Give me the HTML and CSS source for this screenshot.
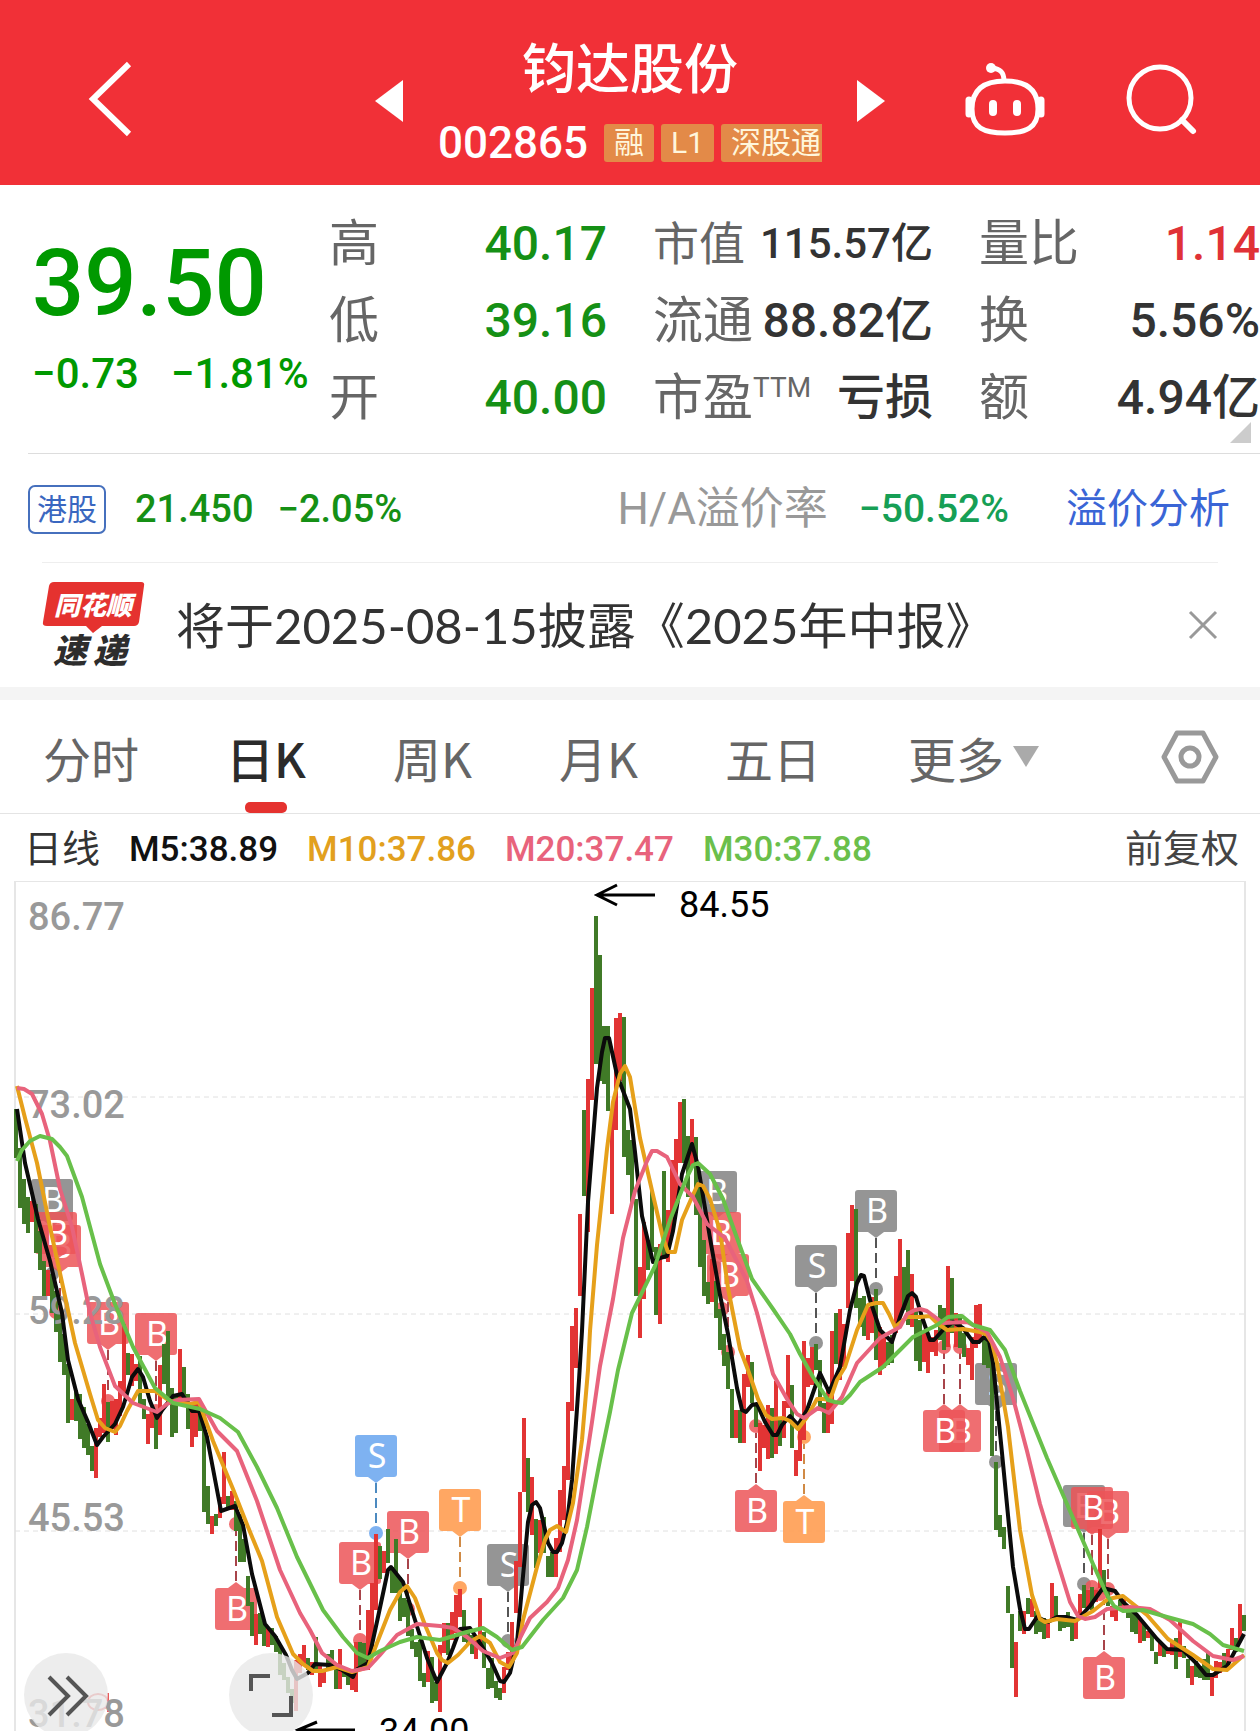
FILE: index.html
```html
<!DOCTYPE html>
<html lang="zh-CN">
<head>
<meta charset="utf-8">
<meta name="viewport" content="width=device-width, initial-scale=1">
<title>钧达股份 002865</title>
<link rel="stylesheet" href="styles.css">
</head>
<body>
<header class="topbar">
  <div class="topbar-left">
    <button class="icon-btn" type="button" aria-label="返回">
      <svg width="44" height="76" viewBox="0 0 44 76"><path d="M41 3 5 38l36 35" fill="none" stroke="#fff" stroke-width="6"/></svg>
    </button>
  </div>
  <div class="switcher">
    <button class="icon-btn" type="button" aria-label="上一只">
      <svg width="28" height="42" viewBox="0 0 28 42"><path d="M28 0v42L0 21z" fill="#fff"/></svg>
    </button>
    <div class="title">
      <h1 class="name">钧达股份</h1>
      <div class="code-line">
        <span class="code">002865</span>
        <span class="tag">融</span>
        <span class="tag">L1</span>
        <span class="tag tag-cut">深股通</span>
      </div>
    </div>
    <button class="icon-btn" type="button" aria-label="下一只">
      <svg width="28" height="42" viewBox="0 0 28 42"><path d="M0 0v42l28-21z" fill="#fff"/></svg>
    </button>
  </div>
  <div class="topbar-right">
    <button class="icon-btn" type="button" aria-label="智能助手">
      <svg width="82" height="76" viewBox="0 0 82 76" fill="none" stroke="#fff" stroke-width="5">
        <path d="M41 20c19 0 33 7 33 28 0 19-12 24-33 24S8 67 8 48c0-21 14-28 33-28z"/>
        <path d="M40 20c0-9-4-12-12-13"/>
        <circle cx="27" cy="7" r="5" fill="#fff" stroke="none"/>
        <path d="M5 39v14M77 39v14" stroke-width="7" stroke-linecap="round"/>
        <path d="M29 43v8M53 43v8" stroke-width="8" stroke-linecap="round"/>
      </svg>
    </button>
    <button class="icon-btn" type="button" aria-label="搜索">
      <svg width="72" height="76" viewBox="0 0 72 76" fill="none" stroke="#fff" stroke-width="5">
        <circle cx="34" cy="37" r="31"/><path d="m56 59 11 11" stroke-width="6" stroke-linecap="round"/>
      </svg>
    </button>
  </div>
</header>

<main>
<section class="quote">
  <div class="price-box">
    <div class="price">39.50</div>
    <div class="change"><span>−0.73</span><span>−1.81%</span></div>
  </div>
  <dl class="stats">
    <div class="stat"><dt>高</dt><dd class="down">40.17</dd></div>
    <div class="stat"><dt>低</dt><dd class="down">39.16</dd></div>
    <div class="stat"><dt>开</dt><dd class="down">40.00</dd></div>
  </dl>
  <dl class="stats">
    <div class="stat stat-tight"><dt>市值</dt><dd>115.57亿</dd></div>
    <div class="stat"><dt>流通</dt><dd>88.82亿</dd></div>
    <div class="stat"><dt>市盈<sup>TTM</sup></dt><dd>亏损</dd></div>
  </dl>
  <dl class="stats">
    <div class="stat"><dt>量比</dt><dd class="up">1.14</dd></div>
    <div class="stat"><dt>换</dt><dd>5.56%</dd></div>
    <div class="stat"><dt>额</dt><dd>4.94亿</dd></div>
  </dl>
  <svg class="corner" width="21" height="21" viewBox="0 0 21 21" aria-hidden="true"><path d="M21 0v21H0z" fill="#ccc"/></svg>
</section>

<section class="hk">
  <span class="hk-badge">港股</span>
  <span class="hk-num">21.450</span>
  <span class="hk-num">−2.05%</span>
  <span class="hk-label">H/A溢价率</span>
  <span class="hk-premium">−50.52%</span>
  <a class="hk-link" href="#premium">溢价分析</a>
</section>

<section class="notice">
  <svg class="logo" width="104" height="88" viewBox="0 0 104 88" role="img" aria-label="同花顺速递">
    <path d="M12 1h87q4 0 3 4l-5 36q-1 4-5 4H60l-9 7-7-7H5q-5 0-4-4L7 5q1-4 5-4z" fill="#e5322f"/>
    <text class="logo-top" x="12" y="34">同花顺</text>
    <text class="logo-bottom" x="11" y="82">速</text>
    <text class="logo-bottom" x="51" y="82">递</text>
  </svg>
  <a class="notice-text" href="#report">将于2025-08-15披露《2025年中报》</a>
  <button class="icon-btn" type="button" aria-label="关闭">
    <svg width="30" height="30" viewBox="0 0 30 30"><path d="m2 2 26 26M28 2 2 28" stroke="#999" stroke-width="3"/></svg>
  </button>
</section>

<nav class="tabs">
  <button class="tab" type="button">分时</button>
  <button class="tab tab-on" type="button">日K</button>
  <button class="tab" type="button">周K</button>
  <button class="tab" type="button">月K</button>
  <button class="tab" type="button">五日</button>
  <button class="tab tab-more" type="button">更多<svg width="26" height="21" viewBox="0 0 26 21"><path d="M0 0h26L13 21z" fill="#aaa"/></svg></button>
  <button class="icon-btn tab-settings" type="button" aria-label="图表设置">
    <svg width="58" height="56" viewBox="0 0 58 56" fill="none" stroke="#999" stroke-width="5" stroke-linejoin="round"><path d="M16 4h26l13 24-13 24H16L3 28z"/><circle cx="29" cy="28" r="9"/></svg>
  </button>
</nav>

<div class="ma-row">
  <span class="ma-period">日线</span>
  <span class="ma">M5:38.89</span>
  <span class="ma ma-10">M10:37.86</span>
  <span class="ma ma-20">M20:37.47</span>
  <span class="ma ma-30">M30:37.88</span>
  <button class="adjust" type="button">前复权</button>
</div>

<section class="chart" aria-label="日K线图">
<svg class="plot" viewBox="0 881 1260 850">
  <defs>
    <path id="tag-down" d="M-18 0h36a3 3 0 0 1 3 3v36a3 3 0 0 1-3 3h-10l-8 6-8-6h-10a3 3 0 0 1-3-3v-36a3 3 0 0 1 3-3z"/>
    <path id="tag-up" d="M-18 0h10l8-6 8 6h10a3 3 0 0 1 3 3v36a3 3 0 0 1-3 3h-36a3 3 0 0 1-3-3v-36a3 3 0 0 1 3-3z"/>
  </defs>
  <path class="frame" d="M15 1740V881H1245V1740"/>
  <path class="grid" d="M15 1097H1245M15 1314H1245M15 1531H1245"/>

  <g class="gray">
    <use href="#tag-down" x="52" y="1179"/><text x="53" y="1212">B</text><circle cx="52" cy="1274" r="7"/>
    <use href="#tag-down" x="716" y="1171"/><text x="717" y="1204">B</text><circle cx="716" cy="1268" r="7"/>
    <use href="#tag-down" x="508" y="1544"/><text x="509" y="1577">S</text><path d="M508 1592V1634"/><circle cx="508" cy="1641" r="7"/>
    <use href="#tag-down" x="816" y="1245"/><text x="817" y="1278">S</text><path d="M816 1293V1337"/><circle cx="816" cy="1343" r="7"/>
    <use href="#tag-down" x="876" y="1190"/><text x="877" y="1223">B</text><path d="M876 1238V1283"/><circle cx="876" cy="1289" r="7"/>
    <use href="#tag-down" x="996" y="1363"/><text x="997" y="1396">S</text><path d="M996 1411V1455"/><circle cx="996" cy="1462" r="7"/>
    <use href="#tag-down" x="1084" y="1485"/><text x="1085" y="1518">B</text><path d="M1084 1533V1577"/><circle cx="1084" cy="1584" r="7"/>
  </g>
  <g class="red">
    <use href="#tag-down" x="60" y="1225"/><text x="61" y="1258">B</text><path d="M60 1273V1313"/><circle cx="56" cy="1312" r="7"/>
    <use href="#tag-down" x="56" y="1212"/><text x="57" y="1245">B</text>
    <use href="#tag-down" x="108" y="1302"/><text x="109" y="1335">B</text><path d="M108 1350V1394"/><circle cx="108" cy="1401" r="7"/>
    <use href="#tag-down" x="156" y="1313"/><text x="157" y="1346">B</text><path d="M156 1361V1405"/><circle cx="156" cy="1411" r="7"/>
    <use href="#tag-up" x="236" y="1588"/><text x="237" y="1621">B</text><path d="M236 1581V1531"/><circle cx="236" cy="1524" r="7"/>
    <use href="#tag-down" x="360" y="1542"/><text x="361" y="1575">B</text><path d="M360 1590V1633"/><circle cx="360" cy="1640" r="7"/>
    <use href="#tag-down" x="408" y="1511"/><text x="409" y="1544">B</text><path d="M408 1559V1603"/><circle cx="408" cy="1609" r="7"/>
    <use href="#tag-down" x="720" y="1212"/><text x="721" y="1245">B</text><circle cx="722" cy="1309" r="7"/>
    <use href="#tag-down" x="728" y="1254"/><text x="729" y="1287">B</text><path d="M728 1302V1345"/><circle cx="728" cy="1352" r="7"/>
    <use href="#tag-up" x="756" y="1490"/><text x="757" y="1523">B</text><path d="M756 1483V1433"/><circle cx="756" cy="1426" r="7"/>
    <use href="#tag-up" x="960" y="1410"/><text x="961" y="1443">B</text><path d="M960 1404V1353"/><circle cx="960" cy="1347" r="7"/>
    <use href="#tag-up" x="944" y="1410"/><text x="945" y="1443">B</text><path d="M944 1404V1353"/><circle cx="944" cy="1347" r="7"/>
    <use href="#tag-down" x="1108" y="1491"/><text x="1109" y="1524">B</text><path d="M1108 1539V1583"/><circle cx="1108" cy="1589" r="7"/>
    <use href="#tag-down" x="1092" y="1487"/><text x="1093" y="1520">B</text><path d="M1092 1535V1580"/><circle cx="1092" cy="1587" r="7"/>
    <use href="#tag-up" x="1104" y="1657"/><text x="1105" y="1690">B</text><path d="M1104 1650V1600"/><circle cx="1100" cy="1594" r="7"/>
  </g>
  <g class="orange">
    <use href="#tag-down" x="460" y="1489"/><text x="461" y="1522">T</text><path d="M460 1537V1581"/><circle cx="460" cy="1588" r="7"/>
    <use href="#tag-up" x="804" y="1501"/><text x="805" y="1534">T</text><path d="M804 1494V1444"/><circle cx="804" cy="1437" r="7"/>
  </g>
  <g class="blue">
    <use href="#tag-down" x="376" y="1435"/><text x="377" y="1468">S</text><path d="M376 1483V1527"/><circle cx="376" cy="1533" r="7"/>
  </g>
  <path class="ring" d="M108 1693V1712M88 1702a10 8 0 1 0 20 0a10 8 0 1 0-20 0"/>

  <path class="bars-down" d="M16 1109V1158M20 1148V1208M24 1179V1224M28 1197V1233M36 1204V1253M40 1231V1270M44 1261V1296M52 1274V1313M56 1291V1332M60 1313V1362M64 1334V1375M68 1364V1423M76 1390V1421M80 1394V1439M84 1407V1448M88 1424V1455M92 1446V1471M108 1402V1442M128 1353V1375M140 1356V1405M144 1399V1419M156 1416V1449M164 1344V1384M168 1331V1399M172 1388V1437M176 1396V1433M184 1367V1403M188 1394V1429M200 1403V1431M204 1411V1512M208 1486V1524M216 1514V1526M228 1496V1508M236 1501V1531M240 1514V1562M244 1539V1562M248 1576V1606M252 1602V1636M260 1613V1634M264 1621V1646M272 1628V1645M276 1636V1652M280 1645V1675M284 1663V1680M288 1677V1693M292 1689V1703M308 1658V1670M316 1637V1670M328 1654V1670M332 1650V1667M336 1663V1689M344 1667V1677M348 1668V1685M360 1642V1670M364 1643V1667M380 1546V1579M388 1529V1563M392 1567V1593M396 1539V1593M400 1577V1621M404 1598V1617M408 1600V1636M412 1629V1649M416 1642V1657M420 1640V1681M424 1673V1687M432 1657V1703M436 1682V1701M448 1623V1655M464 1610V1642M468 1628V1643M472 1635V1654M484 1632V1668M488 1668V1689M492 1658V1688M496 1681V1698M500 1688V1700M528 1458V1512M536 1519V1568M544 1517V1553M548 1556V1577M552 1552V1577M584 1110V1196M596 916V1064M600 955V1081M604 1026V1084M608 1026V1111M624 1017V1157M628 1130V1175M632 1140V1202M636 1199V1296M648 1240V1270M652 1191V1252M656 1247V1315M664 1171V1259M684 1099V1163M688 1136V1197M696 1137V1215M700 1184V1267M704 1240V1296M708 1282V1304M716 1281V1318M720 1309V1350M724 1334V1366M728 1352V1389M732 1389V1438M740 1410V1443M752 1362V1403M756 1403V1427M772 1408V1458M780 1420V1446M792 1385V1448M816 1344V1370M820 1360V1410M824 1403V1433M836 1313V1364M856 1209V1308M860 1298V1327M864 1296V1336M876 1289V1360M888 1342V1365M892 1335V1363M904 1267V1310M908 1250V1325M916 1310V1361M920 1320V1371M940 1305V1340M944 1308V1350M952 1278V1333M960 1314V1348M964 1333V1357M984 1337V1365M988 1340V1368M992 1350V1456M996 1462V1530M1000 1515V1537M1004 1527V1549M1008 1586V1613M1012 1614V1668M1020 1611V1631M1028 1598V1614M1036 1611V1634M1040 1617V1632M1044 1618V1639M1056 1596V1617M1060 1617V1631M1064 1617V1628M1068 1612V1627M1072 1617V1641M1084 1585V1608M1092 1587V1610M1104 1570V1592M1108 1590V1606M1120 1600V1610M1128 1608V1618M1132 1611V1632M1136 1615V1634M1144 1624V1641M1152 1632V1651M1156 1652V1664M1164 1646V1657M1176 1638V1669M1184 1646V1658M1188 1659V1678M1196 1661V1677M1200 1666V1678M1204 1659V1680M1208 1653V1680M1224 1653V1669M1236 1638V1652M1244 1615V1631"/>
  <path class="bars-up" d="M32 1201V1222M48 1270V1296M72 1399V1420M96 1428V1478M100 1418V1437M104 1384V1433M112 1401V1429M116 1399V1435M120 1381V1416M124 1324V1394M132 1354V1386M136 1364V1381M148 1414V1444M152 1411V1428M160 1365V1435M180 1349V1399M192 1403V1447M196 1399V1437M212 1516V1534M220 1497V1518M224 1452V1504M232 1491V1510M256 1614V1645M268 1628V1647M296 1660V1711M300 1654V1673M304 1645V1665M312 1662V1675M320 1663V1687M324 1670V1683M340 1649V1689M352 1670V1690M356 1642V1692M368 1610V1670M372 1583V1647M376 1534V1610M384 1551V1573M428 1651V1682M440 1645V1712M444 1623V1653M452 1612V1640M456 1595V1633M460 1589V1617M476 1637V1659M480 1598V1647M504 1667V1693M508 1652V1670M512 1622V1663M516 1561V1613M520 1492V1567M524 1418V1492M532 1477V1535M540 1520V1553M556 1538V1577M560 1490V1552M564 1466V1520M568 1402V1480M572 1326V1411M576 1308V1368M580 1214V1296M588 1079V1232M592 988V1100M612 1109V1214M616 1018V1130M620 1013V1081M640 1267V1338M644 1222V1299M660 1244V1324M668 1210V1262M672 1160V1234M676 1139V1213M680 1102V1163M692 1119V1166M712 1259V1302M736 1410V1438M744 1374V1443M748 1355V1387M760 1423V1471M764 1425V1448M768 1405V1459M776 1381V1454M784 1401V1438M788 1355V1408M796 1450V1476M800 1423V1461M804 1341V1440M808 1358V1387M812 1347V1385M828 1390V1433M832 1331V1424M840 1309V1380M844 1324V1367M848 1233V1308M852 1205V1281M868 1307V1340M872 1297V1333M880 1327V1375M884 1337V1368M896 1276V1333M900 1239V1317M912 1274V1327M924 1333V1362M928 1333V1373M932 1337V1352M936 1330V1356M948 1266V1347M956 1313V1347M968 1348V1365M972 1337V1380M976 1305V1348M980 1304V1340M1016 1642V1697M1024 1611V1634M1032 1599V1617M1048 1620V1638M1052 1583V1622M1076 1620V1639M1080 1594V1615M1088 1590V1608M1096 1590V1602M1100 1529V1588M1112 1606V1617M1116 1608V1621M1124 1599V1610M1140 1618V1643M1148 1631V1638M1160 1643V1656M1168 1648V1654M1172 1641V1655M1180 1622V1657M1192 1666V1685M1212 1673V1696M1216 1661V1678M1220 1662V1673M1228 1649V1664M1232 1628V1650M1240 1604V1641"/>

  <g class="axis">
    <text x="28" y="930">86.77</text><text x="28" y="1118">73.02</text><text x="28" y="1324">59.28</text><text x="28" y="1531">45.53</text><text x="28" y="1727">31.78</text>
  </g>

  <polyline class="line ma5-line" points="17,1109 25,1163 38,1219 50,1261 62,1313 68,1360 78,1399 88,1422 97,1445 103,1437 115,1424 123,1407 132,1377 138,1369 143,1377 150,1401 157,1418 163,1409 173,1396 182,1394 192,1411 199,1411 207,1437 221,1511 235,1506 243,1525 252,1574 265,1624 275,1636 286,1655 292,1670 297,1679 308,1673 315,1664 330,1665 342,1670 353,1677 356,1670 368,1663 378,1617 388,1570 391,1567 403,1582 415,1620 427,1658 437,1682 447,1663 453,1648 460,1629 470,1628 480,1643 492,1663 500,1681 504,1682 510,1673 517,1643 522,1587 528,1522 532,1505 536,1502 540,1508 548,1543 553,1552 557,1552 562,1543 567,1523 572,1480 579,1380 582,1331 588,1202 597,1088 602,1052 605,1038 609,1038 617,1075 630,1109 635,1152 642,1216 653,1262 660,1258 667,1256 673,1231 682,1174 692,1144 698,1166 710,1238 720,1295 728,1334 737,1388 742,1410 746,1412 752,1405 757,1404 765,1422 773,1435 777,1435 782,1425 790,1416 798,1425 807,1410 820,1373 829,1392 840,1367 850,1310 857,1283 861,1275 864,1276 870,1300 880,1330 892,1342 900,1317 908,1296 912,1293 916,1297 922,1317 930,1340 934,1340 943,1330 953,1322 963,1328 973,1342 979,1342 984,1337 989,1341 993,1363 1002,1453 1013,1567 1020,1609 1025,1629 1029,1629 1037,1617 1048,1622 1057,1617 1066,1617 1077,1620 1090,1606 1103,1588 1115,1591 1123,1602 1137,1615 1157,1639 1167,1649 1183,1650 1197,1664 1206,1675 1213,1675 1227,1666 1244,1634"/>
  <polyline class="line ma10-line" points="17,1086 25,1118 37,1163 50,1227 63,1287 75,1343 90,1394 98,1420 105,1428 115,1432 120,1426 127,1411 138,1391 155,1391 170,1401 190,1404 199,1402 213,1441 233,1489 248,1527 262,1561 277,1617 293,1654 303,1664 313,1671 322,1671 337,1667 352,1672 368,1667 377,1643 390,1610 400,1592 407,1586 415,1598 425,1625 437,1653 442,1660 448,1663 458,1655 470,1642 480,1636 490,1643 500,1662 509,1667 517,1653 523,1620 537,1567 545,1540 550,1530 557,1526 566,1532 573,1503 582,1440 588,1370 590,1331 597,1245 607,1149 613,1102 620,1074 625,1066 630,1077 640,1138 653,1195 663,1238 668,1252 675,1252 682,1220 692,1197 698,1184 703,1186 710,1199 720,1231 728,1288 740,1349 748,1370 758,1399 766,1415 772,1419 783,1418 790,1421 798,1429 807,1417 817,1399 823,1399 830,1400 837,1380 845,1367 857,1330 868,1305 876,1303 883,1303 889,1314 895,1327 907,1317 920,1317 930,1316 937,1323 947,1330 963,1329 980,1332 987,1335 992,1343 997,1363 1008,1427 1020,1530 1032,1595 1040,1619 1045,1622 1057,1619 1075,1621 1093,1611 1108,1599 1123,1596 1147,1615 1168,1639 1193,1655 1213,1669 1227,1670 1244,1655"/>
  <polyline class="line ma20-line" points="17,1088 24,1089 32,1094 42,1114 50,1141 60,1189 72,1227 82,1274 90,1313 100,1347 115,1386 133,1403 157,1412 167,1404 177,1400 199,1399 217,1431 237,1451 257,1501 280,1570 300,1613 310,1630 322,1653 337,1665 352,1671 368,1668 380,1655 397,1635 417,1624 440,1626 453,1628 467,1637 483,1651 500,1658 513,1653 520,1638 530,1618 547,1602 558,1588 568,1560 577,1520 587,1455 592,1422 600,1366 613,1299 623,1238 635,1191 647,1161 652,1151 657,1151 667,1157 680,1184 693,1197 707,1224 725,1238 747,1281 757,1313 773,1374 787,1399 797,1414 804,1418 818,1408 829,1413 842,1397 857,1363 880,1338 900,1327 907,1314 915,1310 920,1309 927,1311 943,1323 967,1322 987,1332 1000,1357 1013,1398 1027,1451 1040,1504 1057,1560 1070,1602 1078,1616 1085,1619 1095,1617 1107,1609 1130,1607 1150,1609 1170,1620 1193,1641 1213,1656 1233,1660 1244,1656"/>
  <polyline class="line ma30-line" points="17,1161 22,1150 30,1141 40,1136 52,1139 60,1147 67,1156 82,1197 100,1264 115,1304 133,1347 155,1388 173,1403 200,1409 220,1418 238,1432 257,1467 277,1508 297,1557 323,1610 343,1637 357,1653 368,1658 380,1651 400,1642 417,1637 440,1640 467,1632 483,1628 497,1637 512,1650 522,1647 543,1620 563,1598 577,1570 587,1527 600,1460 610,1412 618,1370 632,1313 655,1266 670,1220 687,1177 693,1165 698,1163 710,1174 723,1199 737,1238 752,1279 773,1309 790,1334 800,1354 813,1377 828,1400 835,1402 842,1403 850,1395 860,1382 883,1367 898,1352 913,1337 937,1325 948,1317 962,1316 973,1325 990,1330 1005,1350 1020,1391 1047,1458 1070,1511 1093,1564 1107,1595 1114,1606 1123,1611 1143,1610 1167,1617 1193,1624 1210,1634 1223,1645 1244,1651"/>

  <path class="arrow" d="M655 895H597M617 885 597 895l20 10M355 1730H299M317 1722 298 1730l19 10"/>
  <text class="peak" x="679" y="917">84.55</text>
  <text class="peak" x="379" y="1744">34.00</text>
</svg>
<div class="tools">
  <button class="round-btn" type="button" aria-label="展开">
    <svg width="84" height="84" viewBox="0 0 84 84"><path d="m25 24 19 19-19 19M43 24l19 19-19 19" fill="none" stroke="#555" stroke-width="4"/></svg>
  </button>
  <button class="round-btn" type="button" aria-label="全屏">
    <svg width="84" height="84" viewBox="0 0 84 84"><path d="M22 38V23h19M43 62h19V43" fill="none" stroke="#555" stroke-width="4"/></svg>
  </button>
</div>
</section>
</main>
</body>
</html>
```

FILE: styles.css
```css
* { box-sizing: border-box; }

body {
  margin: 0;
  background: #fff;
  color: #333;
  font-family: Roboto, "Noto Sans CJK SC", sans-serif;
  line-height: 1;
}

button {
  border: 0;
  padding: 0;
  background: none;
  color: inherit;
  font: inherit;
  cursor: pointer;
}

a { color: inherit; text-decoration: none; }
svg { display: block; }
h1, dl, dd { margin: 0; }

.icon-btn { flex: none; }

/* Title bar */
.topbar {
  display: grid;
  grid-template-columns: 1fr auto 1fr;
  height: 185px;
  background: #f13037;
  color: #fff;
}

.topbar-left,
.topbar-right {
  display: flex;
  align-items: center;
  padding: 12px 62px 0 88px;
}

.topbar-right {
  justify-content: flex-end;
  gap: 80px;
  padding-left: 0;
}

.switcher {
  display: flex;
  align-items: center;
  gap: 35px;
  padding-top: 17px;
}

.title {
  width: 384px;
  overflow: hidden;
}

.name {
  font-size: 54px;
  font-weight: 500;
  line-height: 64px;
  text-align: center;
}

.code-line {
  display: flex;
  align-items: center;
  gap: 7px;
  height: 60px;
  padding-top: 20px;
}

.code {
  margin-right: 9px;
  font-size: 44px;
  font-weight: 500;
  line-height: 40px;
}

.tag {
  flex: none;
  padding: 0 10px;
  border-radius: 3px;
  background: #e38a48;
  color: #fff6dc;
  font-size: 30px;
  line-height: 38px;
}

/* Quote */
.quote {
  position: relative;
  display: grid;
  grid-template-columns: minmax(0, 251fr) minmax(0, 278fr) minmax(0, 280fr) minmax(0, 281fr);
  column-gap: 46px;
  padding: 20px 0 18px 32px;
}

.quote::after {
  content: "";
  position: absolute;
  right: 0;
  bottom: 0;
  left: 28px;
  border-bottom: 1px solid #ddd;
}

.price-box {
  padding-top: 33px;
  color: #009900;
  font-weight: 500;
  white-space: nowrap;
}

.price {
  font-size: 92px;
  line-height: 92px;
}

.change {
  display: flex;
  gap: 32px;
  margin-top: 23px;
  font-size: 42px;
  line-height: 42px;
}

.stat {
  display: flex;
  align-items: center;
  justify-content: space-between;
  height: 77px;
  font-size: 48px;
  white-space: nowrap;
}

.stat dt { color: #666; font-size: 50px; }
.stat dd { font-weight: 500; }
.stat-tight { font-size: 42px; }
.stat-tight dt { font-size: 46px; }
.stat .down { color: #159015; }
.stat .up { color: #e03237; }

.stat sup {
  font-size: 28px;
  line-height: 28px;
}

.corner {
  position: absolute;
  right: 9px;
  bottom: 11px;
}

/* Hong Kong share row */
.hk {
  display: flex;
  align-items: center;
  height: 108px;
  padding: 2px 30px 0 28px;
  font-size: 38px;
}

.hk-badge {
  margin-right: 29px;
  padding: 0 7px;
  border: 2px solid #4670bd;
  border-radius: 7px;
  color: #3a67c0;
  font-size: 30px;
  line-height: 45px;
}

.hk-num {
  margin-right: 24px;
  color: #159015;
  font-weight: 500;
}

.hk-label {
  margin-left: auto;
  color: #999;
  font-size: 44px;
}

.hk-premium {
  margin: 0 57px 0 31px;
  color: #169f55;
  font-size: 39px;
  font-weight: 500;
}

.hk-link { color: #3a65d6; font-size: 41px; }

/* Notice */
.notice {
  display: flex;
  align-items: center;
  height: 125px;
  margin: 0 42px;
  border-top: 1px solid #eee;
}

.logo-top,
.logo-bottom {
  font-family: "Noto Sans CJK SC", sans-serif;
  font-style: italic;
  font-weight: 900;
}

.logo-top { fill: #fff; font-size: 26px; }
.logo-bottom { fill: #2d2d2d; font-size: 34px; }

.notice-text {
  flex: 1;
  padding-left: 30px;
  font-family: Lato, "Noto Sans CJK SC", sans-serif;
  font-size: 49px;
  white-space: nowrap;
}

/* Period tabs */
.tabs {
  display: flex;
  align-items: center;
  gap: 87px;
  height: 127px;
  padding: 0 41px 0 43px;
  border-top: 13px solid #f4f4f4;
  border-bottom: 1px solid #e4e4e4;
  color: #666;
  font-family: "Noto Sans CJK SC", sans-serif;
  font-size: 48px;
}

.tab {
  position: relative;
  flex: none;
  height: 113px;
}

.tab-on { color: #2b2b2b; font-weight: 500; }

.tab-on::after {
  content: "";
  position: absolute;
  bottom: 0;
  left: 50%;
  width: 42px;
  height: 11px;
  margin-left: -21px;
  border-radius: 5px;
  background: #e5322f;
}

.tab-more {
  display: flex;
  align-items: center;
  gap: 9px;
}

.tab-settings { margin-left: auto; }

/* Moving-average legend */
.ma-row {
  display: flex;
  align-items: center;
  gap: 29px;
  height: 67px;
  padding: 3px 21px 0 24px;
  font-size: 35px;
  white-space: nowrap;
}

.ma-period,
.adjust { font-size: 38px; }
.ma { color: #111; font-weight: 500; }
.ma-10 { color: #e2a01e; }
.ma-20 { color: #e8637c; }
.ma-30 { color: #6bbf4b; }
.adjust { margin-left: auto; color: #444; }

/* Candlestick chart */
.chart {
  position: relative;
  overflow: hidden;
}

.plot { width: 100%; height: auto; }
.frame { fill: none; stroke: #e6e6e6; stroke-width: 2; }
.grid { stroke: #e0e0e0; stroke-width: 1; stroke-dasharray: 5 4; }
.bars-up { stroke: #e23434; stroke-width: 4; }
.bars-down { stroke: #407a27; stroke-width: 4; }

.line {
  fill: none;
  stroke-width: 4;
  stroke-linejoin: round;
}

.ma5-line { stroke: #0b0b0b; }
.ma10-line { stroke: #e6a01a; }
.ma20-line { stroke: #e8637c; }
.ma30-line { stroke: #68c04a; }

.axis text {
  fill: #999;
  font-size: 38px;
  font-weight: 500;
}

.peak { fill: #000; font-size: 36px; }
.arrow { fill: none; stroke: #000; stroke-width: 3; }
.ring { fill: none; stroke: #e85a5a; stroke-width: 2; }

.gray, .red, .orange, .blue { stroke-width: 2; stroke-dasharray: 10 5; }
.gray use, .gray circle { fill: #8a8a8a; stroke: none; opacity: 0.9; }
.red use, .red circle { fill: #ec5558; stroke: none; opacity: 0.85; }
.orange use, .orange circle { fill: #ff9d52; stroke: none; opacity: 0.9; }
.blue use, .blue circle { fill: #70aaf0; stroke: none; opacity: 0.9; }
.gray { stroke: #555; }
.red { stroke: #a8444a; }
.orange { stroke: #d08a45; }
.blue { stroke: #4c8ac0; }

.gray text, .red text, .orange text, .blue text {
  fill: #fff;
  stroke: none;
  font-family: "Noto Sans", sans-serif;
  font-size: 34px;
  text-anchor: middle;
}

.tools {
  position: absolute;
  bottom: -6px;
  left: 24px;
  display: flex;
  gap: 121px;
}

.round-btn {
  border-radius: 50%;
  background: rgba(233, 233, 233, 0.8);
}
```
